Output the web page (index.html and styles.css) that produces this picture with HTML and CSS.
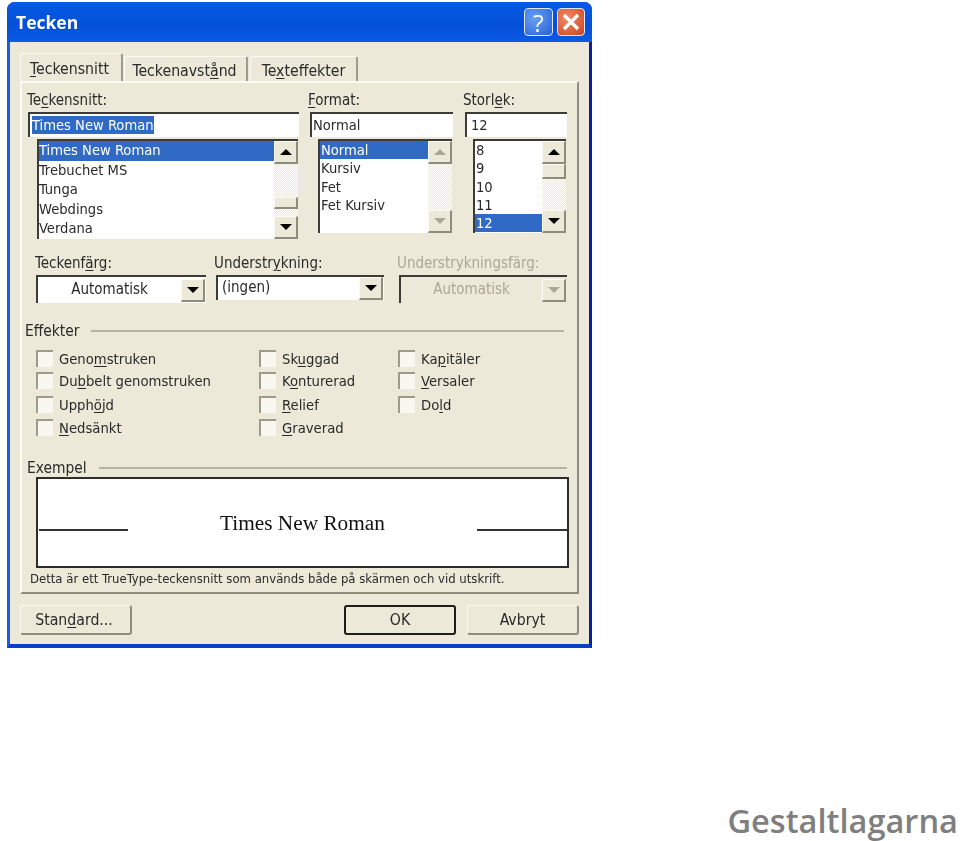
FILE: index.html
```html
<!DOCTYPE html>
<html lang="sv">
<head>
    <meta charset="UTF-8">
    <title>Gestaltlagarna</title>
    <link rel="stylesheet" href="styles.css">
</head>
<body>
    <div class="dialog">
        <div class="titlebar">
            <span class="title">Tecken</span>
            <span class="title-btn help">?</span>
            <span class="title-btn close">
                <svg width="18" height="18" viewBox="0 0 18 18"><path d="M2 2L16 16M16 2L2 16" stroke="#fff" stroke-width="3.4"/></svg>
            </span>
        </div>
        <div class="client">
            <div class="tabs">
                <div class="tab active"><u>T</u>eckensnitt</div>
                <div class="tab tab-mid">Teckenavst<u>å</u>nd</div>
                <div class="tab tab-last">Te<u>x</u>teffekter</div>
            </div>
            <div class="panel">
                <div class="font-row">
                    <div>
                        <div class="label">Te<u>c</u>kensnitt:</div>
                        <div class="field field-font"><span class="picked">Times New Roman</span></div>
                        <div class="list list-font">
                            <div class="rows rows-font">
                                <div class="row selected">Times New Roman</div>
                                <div class="row">Trebuchet MS</div>
                                <div class="row">Tunga</div>
                                <div class="row">Webdings</div>
                                <div class="row">Verdana</div>
                            </div>
                            <div class="scroll">
                                <div class="sbtn"><span class="up"></span></div>
                                <div class="track"><div class="thumb thumb-font"></div></div>
                                <div class="sbtn"><span class="down"></span></div>
                            </div>
                        </div>
                    </div>
                    <div>
                        <div class="label"><u>F</u>ormat:</div>
                        <div class="field field-format">Normal</div>
                        <div class="list list-format">
                            <div class="rows rows-small">
                                <div class="row selected">Normal</div>
                                <div class="row">Kursiv</div>
                                <div class="row">Fet</div>
                                <div class="row">Fet Kursiv</div>
                            </div>
                            <div class="scroll scroll-off">
                                <div class="sbtn"><span class="up"></span></div>
                                <div class="track"></div>
                                <div class="sbtn"><span class="down"></span></div>
                            </div>
                        </div>
                    </div>
                    <div>
                        <div class="label">Storl<u>e</u>k:</div>
                        <div class="field field-size">12</div>
                        <div class="list list-size">
                            <div class="rows rows-small">
                                <div class="row">8</div>
                                <div class="row">9</div>
                                <div class="row">10</div>
                                <div class="row">11</div>
                                <div class="row selected">12</div>
                            </div>
                            <div class="scroll">
                                <div class="sbtn"><span class="up"></span></div>
                                <div class="track"><div class="thumb thumb-size"></div></div>
                                <div class="sbtn"><span class="down"></span></div>
                            </div>
                        </div>
                    </div>
                </div>

                <div class="color-row">
                    <div>
                        <div class="label">Teckenf<u>ä</u>rg:</div>
                        <div class="select select-color">
                            <span class="select-text center">Automatisk</span>
                            <div class="sbtn"><span class="down"></span></div>
                        </div>
                    </div>
                    <div>
                        <div class="label">Understr<u>y</u>kning:</div>
                        <div class="select select-line">
                            <span class="select-text">(ingen)</span>
                            <div class="sbtn"><span class="down"></span></div>
                        </div>
                    </div>
                    <div class="disabled">
                        <div class="label">Understrykningsfärg:</div>
                        <div class="select select-off">
                            <span class="select-text center">Automatisk</span>
                            <div class="sbtn"><span class="down"></span></div>
                        </div>
                    </div>
                </div>

                <div class="legend legend-effects"><span>Effekter</span><i></i></div>
                <div class="checks">
                    <div class="check"><b></b><span>Geno<u>m</u>struken</span></div>
                    <div class="check"><b></b><span>Sk<u>u</u>ggad</span></div>
                    <div class="check"><b></b><span>Ka<u>p</u>itäler</span></div>
                    <div class="check"><b></b><span>Du<u>b</u>belt genomstruken</span></div>
                    <div class="check"><b></b><span>K<u>o</u>nturerad</span></div>
                    <div class="check"><b></b><span><u>V</u>ersaler</span></div>
                    <div class="check"><b></b><span>Upph<u>ö</u>jd</span></div>
                    <div class="check"><b></b><span><u>R</u>elief</span></div>
                    <div class="check"><b></b><span>Do<u>l</u>d</span></div>
                    <div class="check"><b></b><span><u>N</u>edsänkt</span></div>
                    <div class="check"><b></b><span><u>G</u>raverad</span></div>
                </div>

                <div class="legend legend-sample"><span>Exempel</span><i></i></div>
                <div class="preview">
                    <i></i>
                    <span>Times New Roman</span>
                    <i></i>
                </div>
                <div class="note">Detta är ett TrueType-teckensnitt som används både på skärmen och vid utskrift.</div>
            </div>
            <div class="buttons">
                <div class="btn btn-std">Stan<u>d</u>ard...</div>
                <div class="btn btn-ok">OK</div>
                <div class="btn">Avbryt</div>
            </div>
        </div>
    </div>
    <div class="caption">Gestaltlagarna</div>
</body>
</html>
```

FILE: styles.css
```css
html, body {
    margin: 0;
    height: 100%;
}

body {
    background-color: #fff;
    box-sizing: border-box;
    height: 841px;
    padding: 2px 0 0 7px;
    display: flex;
    flex-direction: column;
    overflow: hidden;
    font-family: "DejaVu Sans", sans-serif;
    font-stretch: condensed;
    font-size: 15px;
    color: #2a2a2a;
}

u {
    text-underline-offset: 2px;
    text-decoration-thickness: 1px;
}

.dialog {
    width: 585px;
    height: 646px;
    box-sizing: border-box;
    border-radius: 8px 8px 0 0;
    background: #0a3fd0;
    border-left: 3px solid #1a5fdc;
    border-right: 3px solid #0a1f9e;
    border-bottom: 4px solid #0b3ec8;
    filter: blur(0.35px);
}

.titlebar {
    height: 40px;
    margin: 0 -3px;
    padding: 0 7px 0 9px;
    border-radius: 8px 8px 0 0;
    display: flex;
    align-items: center;
    gap: 4px;
    background: linear-gradient(#0a5ce8 0, #0558e4 8%, #0450d8 60%, #0a5ae6 100%);
}

.title {
    flex: 1;
    font-family: "Open Sans", sans-serif;
    font-stretch: normal;
    font-weight: 700;
    font-size: 17.5px;
    color: #fff;
}

.title-btn {
    width: 28px;
    height: 28px;
    box-sizing: border-box;
    border: 1px solid #dfe8fa;
    border-radius: 4px;
    display: flex;
    align-items: center;
    justify-content: center;
    color: #fff;
}

.help {
    width: 29px;
    background: radial-gradient(circle at 35% 35%, #6ba0f2, #2460d8);
    font-family: "Open Sans", sans-serif;
    font-stretch: normal;
    font-size: 24px;
}

.close {
    background: radial-gradient(circle at 35% 35%, #ee8a68, #d0431e);
}

.client {
    height: 602px;
    box-sizing: border-box;
    padding: 11px 10px 0;
    background-color: #ece9d8;
}

.tabs {
    display: flex;
    align-items: flex-end;
    height: 28px;
    gap: 1px;
    font-size: 15.7px;
}

.tab {
    height: 25px;
    box-sizing: border-box;
    border-top: 1px solid #fbfaf5;
    border-right: 2px solid #9d9b8a;
    border-left: 1px solid #fbfaf5;
    border-radius: 3px 3px 0 0;
    text-align: center;
    line-height: 27px;
}

.tab.active {
    height: 28px;
    width: 103px;
    line-height: 30px;
    padding-right: 3px;
}

.tab-mid {
    width: 124px;
    padding-right: 2px;
}

.tab-last {
    width: 108px;
    margin-left: 1px;
}

.panel {
    height: 513px;
    box-sizing: border-box;
    padding: 7px 0 0 5px;
    border-top: 2px solid #fbfaf5;
    border-left: 2px solid #fbfaf5;
    border-right: 2px solid #8e8c7c;
    border-bottom: 2px solid #8e8c7c;
}

.label {
    height: 20px;
    line-height: 20px;
    margin-bottom: 2px;
    white-space: nowrap;
}

.font-row {
    display: grid;
    grid-template-columns: 272px 146px 105px;
    column-gap: 9px;
}

.field {
    height: 25px;
    box-sizing: border-box;
    margin-left: 1px;
    background: #fff;
    border-top: 2px solid #3c3b36;
    border-left: 2px solid #3c3b36;
    padding-left: 2px;
    line-height: 22px;
    font-size: 14.6px;
}

.field-format {
    margin-left: 2px;
    width: 143px;
    padding-left: 1px;
}

.field-size {
    margin-left: 2px;
    width: 102px;
    padding-left: 4px;
}

.picked {
    background: #316ac5;
    color: #fff;
    display: inline-block;
    line-height: 18px;
}

.list {
    display: flex;
    margin-top: 2px;
    background: #fff;
    box-sizing: border-box;
    border-top: 2px solid #3c3b36;
    border-left: 2px solid #3c3b36;
    font-size: 14.6px;
}

.list-font {
    margin-left: 10px;
    width: 261px;
    height: 100px;
}

.list-format {
    margin-left: 10px;
    width: 134px;
    height: 94px;
}

.list-size {
    margin-left: 10px;
    width: 93px;
    height: 94px;
}

.rows {
    flex: 1;
}

.row {
    white-space: nowrap;
}

.rows-font .row {
    height: 19.6px;
    line-height: 18.6px;
}

.rows-small .row {
    height: 18.3px;
    line-height: 18.3px;
    padding-left: 1px;
}

.selected {
    background: #316ac5;
    color: #fff;
}

.scroll {
    width: 24px;
    display: flex;
    flex-direction: column;
}

.track {
    flex: 1;
    background: repeating-conic-gradient(#ece9d8 0 25%, #fff 0 50%) 0 0 / 2px 2px;
    display: flow-root;
}

.sbtn {
    width: 24px;
    height: 23px;
    flex: none;
    box-sizing: border-box;
    background: #ece9d8;
    border-top: 1px solid #fbfaf5;
    border-left: 1px solid #fbfaf5;
    border-right: 2px solid #8e8c7c;
    border-bottom: 2px solid #8e8c7c;
    display: flex;
    align-items: center;
    justify-content: center;
}

.thumb {
    height: 12px;
    box-sizing: border-box;
    background: #ece9d8;
    border-top: 1px solid #fbfaf5;
    border-left: 1px solid #fbfaf5;
    border-right: 2px solid #8e8c7c;
    border-bottom: 2px solid #8e8c7c;
}

.thumb-font {
    margin-top: 33px;
}

.thumb-size {
    height: 15px;
}

.up, .down {
    width: 0;
    height: 0;
    border-left: 6px solid transparent;
    border-right: 6px solid transparent;
}

.up {
    border-bottom: 6px solid #000;
}

.down {
    border-top: 6px solid #000;
}

.scroll-off .up {
    border-bottom-color: #a9a795;
}

.scroll-off .down {
    border-top-color: #a9a795;
}

.color-row {
    display: grid;
    grid-template-columns: 170px 174px 172px;
    column-gap: 9px;
    margin: 14px 0 0 8px;
    align-items: start;
}

.select {
    display: flex;
    box-sizing: border-box;
    width: 170px;
    height: 28px;
    margin-left: 1px;
    padding: 2px 1px 1px 0;
    background: #fff;
    border-top: 2px solid #3c3b36;
    border-left: 2px solid #3c3b36;
}

.select-line {
    width: 168px;
    height: 25px;
    margin-left: 2px;
    padding-top: 0;
    align-items: stretch;
}

.select-text {
    flex: 1;
    padding-left: 4px;
    line-height: 20px;
}

.center {
    text-align: center;
    padding-left: 0;
}

.disabled .label, .disabled .select-text {
    color: #aca899;
}

.select-off {
    width: 168px;
    margin-left: 2px;
    background: #ece9d8;
}

.disabled .down {
    border-top-color: #a9a795;
}

.legend {
    display: flex;
    align-items: center;
    height: 20px;
    font-size: 15.4px;
}

.legend i {
    flex: 1;
    height: 2px;
    background: #b5b3a3;
    margin-left: 12px;
}

.legend-effects {
    margin-top: 18px;
    margin-left: -2px;
    margin-right: 13px;
}

.legend-sample {
    margin-top: 20px;
    margin-right: 10px;
    height: 18px;
}

.checks {
    display: grid;
    grid-template-columns: 223px 139px 1fr;
    grid-template-rows: 22px 23px 24px 23px;
    margin: 6px 0 0 9px;
    font-size: 14.7px;
}

.check {
    display: flex;
    align-items: center;
    gap: 6px;
    white-space: nowrap;
}

.check b {
    width: 17px;
    height: 17px;
    box-sizing: border-box;
    background: #f8f7f0;
    border-top: 2px solid #9d9b8a;
    border-left: 2px solid #9d9b8a;
}

.preview {
    display: grid;
    grid-template-columns: 89px 1fr 90px;
    align-items: center;
    width: 533px;
    height: 91px;
    box-sizing: border-box;
    margin-left: 9px;
    padding: 0 0 0 1px;
    background: #fff;
    border: 2px solid #2c2c2a;
    font-family: "Liberation Serif", serif;
    font-stretch: normal;
    font-size: 21.3px;
    text-align: center;
    color: #111;
}

.preview span {
    margin-top: 2px;
}

.preview i {
    height: 2px;
    background: #333;
    margin-top: 14px;
}

.note {
    margin: 3px 0 0 3px;
    font-size: 13px;
    line-height: 16px;
    white-space: nowrap;
}

.buttons {
    display: flex;
    gap: 11px;
    margin-top: 11px;
    font-size: 15.7px;
}

.btn {
    width: 112px;
    height: 30px;
    box-sizing: border-box;
    border-top: 1px solid #fbfaf5;
    border-left: 1px solid #fbfaf5;
    border-right: 2px solid #8e8c7c;
    border-bottom: 2px solid #8e8c7c;
    border-radius: 3px;
    text-align: center;
    line-height: 28px;
}

.btn-std {
    padding-right: 3px;
}

.btn-ok {
    margin-left: auto;
    border: 2px solid #1c1c1a;
    line-height: 26px;
}

.caption {
    margin-top: auto;
    padding-right: 2px;
    text-align: right;
    font-family: "Open Sans", sans-serif;
    font-stretch: normal;
    font-weight: 600;
    font-size: 32.6px;
    line-height: 40px;
    color: #7f7f7f;
}
```
